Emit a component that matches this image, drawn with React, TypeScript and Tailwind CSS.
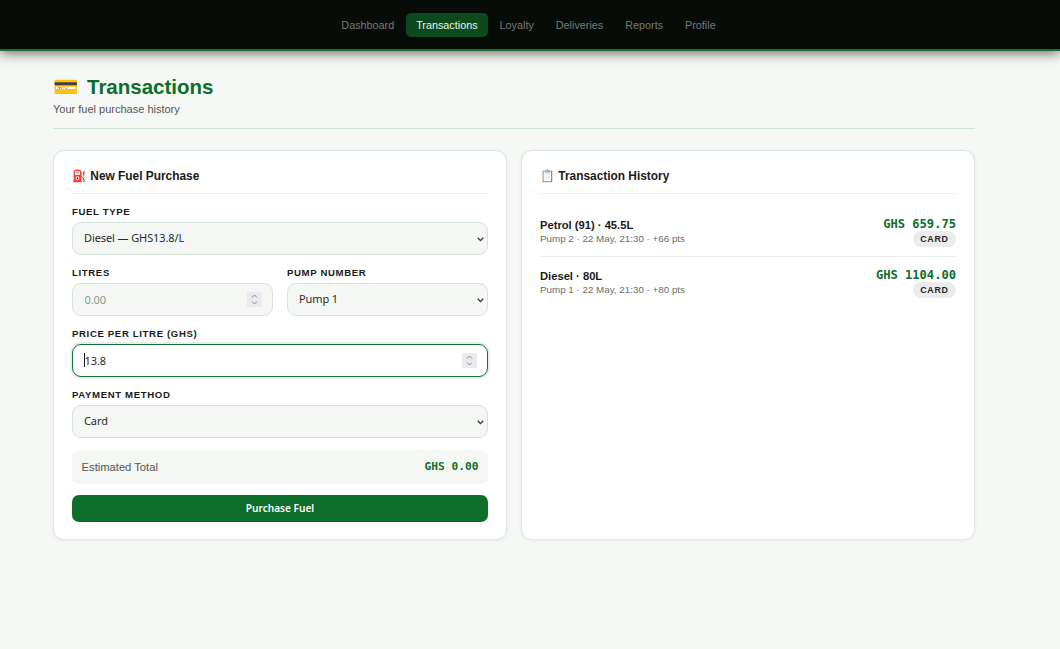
import React from 'react';

const navItems = ['Dashboard', 'Transactions', 'Loyalty', 'Deliveries', 'Reports', 'Profile'];

const labelClass = "block mb-[4px] text-[9.6px] leading-[12px] font-bold uppercase tracking-[0.64px] text-[#1a1a1a]";
const fieldClass = "w-full h-[33px] rounded-[9px] border border-[#d5e3d8] bg-[#f4f7f4] text-[11px] tracking-[-0.1px] text-[#2a2a2a] font-['Noto_Sans',sans-serif] outline-none";

const Navbar = () => (
  <nav className="h-[51px] bg-[#070c09] border-b-2 border-[#1f6b32] shadow-[0_2px_12px_rgba(0,0,0,0.6)] flex justify-center items-start pt-[13px] pr-[3px] gap-[2px]">
    {navItems.map((item) => (
      <a
        key={item}
        className={item === 'Transactions'
          ? "h-[24px] px-[10px] rounded-[5px] bg-[#0c4a1e] text-[#e8f5e9] text-[10.8px] leading-[24px]"
          : "h-[24px] px-[10px] text-[#757b77] text-[10.8px] leading-[24px]"}
      >
        {item}
      </a>
    ))}
  </nav>
);

const Select = ({ value }: { value: string }) => (
  <div className="relative">
    <select className={fieldClass + " appearance-none px-[11px]"} defaultValue={value}>
      <option value={value}>{value}</option>
    </select>
    <svg className="absolute right-[4px] top-[15px] pointer-events-none" width="7" height="5" viewBox="0 0 7 5" fill="none">
      <path d="M0.8 0.8 L3.5 3.6 L6.2 0.8" stroke="#333" strokeWidth="1.3" />
    </svg>
  </div>
);

const NumberInput = ({ placeholder, value, focused }: { placeholder?: string; value?: string; focused?: boolean }) => (
  <div className="relative">
    <input
      type="number"
      placeholder={placeholder}
      defaultValue={value}
      className={fieldClass + " px-[11.5px] [appearance:textfield] placeholder:text-[#8a9a8e] " + (focused ? "!bg-white !border-[#1a6b3a] shadow-[0_0_0_2px_rgba(13,110,42,0.1)]" : "")}
    />
    {focused && <span className="absolute left-[12px] top-[9px] w-px h-[14px] bg-[#1a1a1a]" />}
    <span className="absolute right-[11px] top-[9px] w-[15px] h-[15px] bg-[#e9e9ef] flex items-center justify-center pointer-events-none">
      <svg width="7" height="11" viewBox="0 0 7 11" fill="none">
        <path d="M1 3.5 L3.5 1 L6 3.5 M1 7.5 L3.5 10 L6 7.5" stroke="#8a8a8a" strokeWidth="1" />
      </svg>
    </span>
  </div>
);

const HistoryRow = ({ title, meta, amount, last }: { title: string; meta: string; amount: string; last?: boolean }) => (
  <div className={"flex justify-between items-start h-[51px] pt-[11px] " + (last ? "" : "border-b border-[#e8efe9]")}>
    <div className="pt-[2px]">
      <div className="text-[11.2px] leading-[13px] font-bold text-[#1a1a1a]">{title}</div>
      <div className="text-[9.8px] leading-[11px] mt-[1px] text-[#6b6b6b]">{meta}</div>
    </div>
    <div className="flex flex-col items-end">
      <div className="font-['DejaVu_Sans_Mono',monospace] font-bold text-[12.1px] leading-[15px] text-[#0d6e2a]">{amount}</div>
      <span className="-mt-[1px] px-[7.5px] h-[16px] rounded-full bg-[#ececec] text-[8.8px] leading-[16px] font-bold tracking-[0.7px] text-[#222]">CARD</span>
    </div>
  </div>
);

export default function App() {
  return (
    <div className="min-h-[649px] bg-[#f5f8f5] font-['Liberation_Sans',sans-serif]">
      <Navbar />
      <main className="w-[922px] ml-[53px] pt-[24px]">
        <header className="pb-[12px] border-b border-[#cfe6d3] mb-[21px]">
          <h1 className="flex gap-[8px] text-[20.5px] leading-[24px] font-bold text-[#0d6e2a]"><span>💳</span><span>Transactions</span></h1>
          <p className="text-[11px] leading-[13px] mt-[4px] text-[#555]">Your fuel purchase history</p>
        </header>

        <div className="grid grid-cols-2 gap-[14px]">
          <section className="h-[390px] bg-white border border-[#dde7df] rounded-[11px] shadow-[0_1px_4px_rgba(0,0,0,0.06)] px-[18px] pt-[18px]">
            <h2 className="text-[11.9px] leading-[15px] font-bold text-[#1a1a1a] pb-[9px] border-b border-[#e8efe9] mb-[12px]">⛽ New Fuel Purchase</h2>

            <div className="mb-[12px]">
              <label className={labelClass}>Fuel Type</label>
              <Select value="Diesel — GHS13.8/L" />
            </div>

            <div className="grid grid-cols-2 gap-[14px] mb-[12px]">
              <div>
                <label className={labelClass}>Litres</label>
                <NumberInput placeholder="0.00" />
              </div>
              <div>
                <label className={labelClass}>Pump Number</label>
                <Select value="Pump 1" />
              </div>
            </div>

            <div className="mb-[12px]">
              <label className={labelClass}>Price per Litre (GHS)</label>
              <NumberInput value="13.8" focused />
            </div>

            <div className="mb-[12px]">
              <label className={labelClass}>Payment Method</label>
              <Select value="Card" />
            </div>

            <div className="h-[34px] rounded-[7px] bg-[#f4f7f4] flex items-center justify-between px-[9.6px] mb-[11px]">
              <span className="text-[11.2px] text-[#555]">Estimated Total</span>
              <span className="font-['DejaVu_Sans_Mono',monospace] font-bold text-[11.2px] text-[#0d6e2a]">GHS 0.00</span>
            </div>

            <button className="w-full h-[27px] rounded-[7px] bg-[#0d6e2a] text-white text-[10.1px] font-semibold font-['Noto_Sans',sans-serif]">Purchase Fuel</button>
          </section>

          <section className="h-[390px] bg-white border border-[#dde7df] rounded-[11px] shadow-[0_1px_4px_rgba(0,0,0,0.06)] px-[18px] pt-[18px]">
            <h2 className="text-[11.9px] leading-[15px] font-bold text-[#1a1a1a] pb-[9px] border-b border-[#e8efe9] mb-[12px]">📋 Transaction History</h2>
            <HistoryRow title="Petrol (91) · 45.5L" meta="Pump 2 · 22 May, 21:30 · +66 pts" amount="GHS 659.75" />
            <HistoryRow title="Diesel · 80L" meta="Pump 1 · 22 May, 21:30 · +80 pts" amount="GHS 1104.00" last />
          </section>
        </div>
      </main>
    </div>
  );
}
